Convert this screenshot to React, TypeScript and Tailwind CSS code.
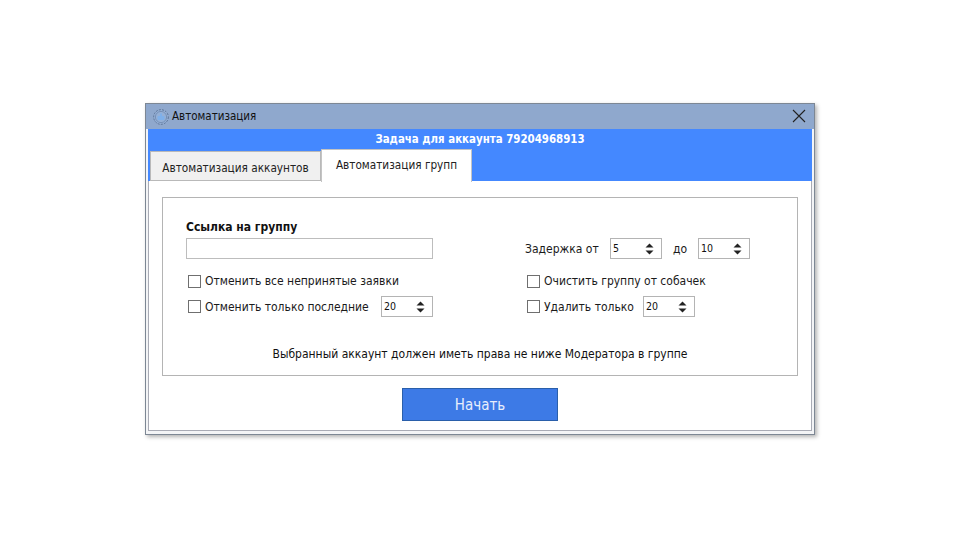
import React from "react";

const font = { fontFamily: '"DejaVu Sans Condensed", "DejaVu Sans", sans-serif', fontStretch: "condensed" };

function Spin({ value, width = "w-[52px]" }: { value: string; width?: string }) {
  return (
    <div className={`${width} h-[21px] border border-[#b4b4b4] bg-white flex items-center justify-between pl-[2px] pr-[7px] text-[10.5px] text-[#111]`}>
      <span>{value}</span>
      <svg width="9" height="12" viewBox="0 0 9 12" className="block">
        <path d="M4.5 0.5 L8.5 4.5 H0.5 Z M0.5 7.5 H8.5 L4.5 11.5 Z" fill="#222" />
      </svg>
    </div>
  );
}

function Check({ label }: { label: string }) {
  return (
    <div className="flex items-center gap-[4px]">
      <div className="w-[13px] h-[13px] border border-[#6f6f6f] bg-white" />
      <span className="whitespace-nowrap">{label}</span>
    </div>
  );
}

function Gear() {
  return (
    <svg width="18" height="18" viewBox="0 0 18 18" className="block">
      <circle cx="9" cy="9" r="7.3" fill="#95b0d6" stroke="#5c7396" strokeWidth="1" strokeDasharray="2 1.2" />
      <circle cx="9" cy="9" r="5.6" fill="none" stroke="#6a83a8" strokeWidth="0.7" />
      <rect x="5.5" y="8" width="7" height="4" rx="1" fill="#7fb0ea" />
      <rect x="8" y="5.5" width="2" height="3" fill="#7fb0ea" />
    </svg>
  );
}

export default function App() {
  return (
    <div className="w-[962px] h-[540px] bg-white pt-[103px] pl-[145px] overflow-hidden text-[12px] text-[#1a1a1a]" style={font}>
      <div className="w-[670px] h-[332px] border border-[#7d8794] bg-[#f3f4f6] shadow-[2px_2px_4px_rgba(0,0,0,0.3)] flex flex-col">
        <div className="h-[25px] bg-[#8fa8cd] flex items-center pl-[6px] pr-[8px] shrink-0">
          <Gear />
          <span className="ml-[2px] text-[#111] text-[11.5px]">Автоматизация</span>
          <svg width="14" height="14" viewBox="0 0 14 14" className="ml-auto mb-[2px]">
            <path d="M1 1 L13 13 M13 1 L1 13" stroke="#222" strokeWidth="1.1" fill="none" />
          </svg>
        </div>
        <div className="flex-1 mx-[2px] mb-[3px] border-r border-b border-l border-[#a9abb5] flex flex-col bg-white">
          <div className="h-[52px] -mx-px bg-[#4488ff] relative shrink-0">
            <div className="text-center text-white font-bold text-[11.4px] leading-[21px]">Задача для аккаунта 79204968913</div>
            <div className="absolute left-[2px] bottom-0 flex items-end">
              <div className="w-[171px] h-[30px] bg-[#f0f0f0] border border-[#b9b9b9] flex items-center justify-center text-[#222] text-[11.7px] pt-[5px]">Автоматизация аккаунтов</div>
              <div className="w-[151px] h-[33px] -mb-px bg-white border-t border-x border-[#c4c4c4] flex items-center justify-center text-[#222] text-[11.7px] pb-[1px]">Автоматизация групп</div>
            </div>
          </div>
          <div className="flex-1 px-[13px] pt-[16px] flex flex-col">
            <div className="w-[636px] h-[179px] border border-[#b4b4b4] flex flex-col">
              <div className="flex pl-[23px] pt-[20px] h-[126px]">
                <div className="w-[339px] flex flex-col">
                  <div className="font-bold leading-[18px] text-[#111]">Ссылка на группу</div>
                  <div className="w-[247px] h-[21px] border border-[#bdbdbd] bg-white mt-[2px]" />
                  <div className="ml-[2px] mt-[13px]"><Check label="Отменить все непринятые заявки" /></div>
                  <div className="ml-[2px] mt-[6px] w-[245px] flex items-center justify-between">
                    <Check label="Отменить только последние" />
                    <Spin value="20" />
                  </div>
                </div>
                <div className="flex flex-col pt-[20px]">
                  <div className="flex items-center">
                    <span className="w-[85px] whitespace-nowrap">Задержка от</span>
                    <Spin value="5" />
                    <span className="w-[36px] text-center">до</span>
                    <Spin value="10" />
                  </div>
                  <div className="ml-[2px] mt-[13px]"><Check label="Очистить группу от собачек" /></div>
                  <div className="ml-[2px] mt-[6px] flex items-center gap-[9px]">
                    <Check label="Удалить только" />
                    <Spin value="20" />
                  </div>
                </div>
              </div>
              <div className="text-center leading-[18px] mt-[21px] text-[#111]">Выбранный аккаунт должен иметь права не ниже Модератора в группе</div>
            </div>
            <div className="flex justify-center mt-[12px]">
              <div className="w-[156px] h-[33px] bg-[#3d7ae6] border border-[#2a5faa] text-[#e8eefc] text-[15px] pt-[2px] flex items-center justify-center">Начать</div>
            </div>
          </div>
        </div>
      </div>
    </div>
  );
}
